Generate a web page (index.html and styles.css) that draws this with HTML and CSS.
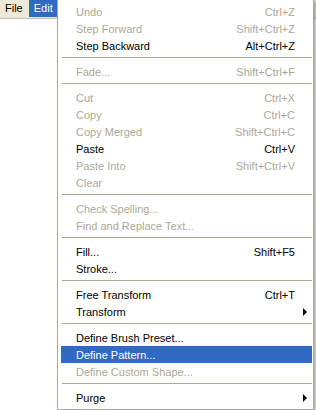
FILE: index.html
```html
<!DOCTYPE html>
<html lang="en">
<head>
    <meta charset="UTF-8">
    <meta name="viewport" content="width=device-width, initial-scale=1.0">
    <title>Edit Menu</title>
    <link rel="stylesheet" href="styles.css">
</head>
<body>
    <div class="window">
        <div class="menubar">
            <span class="menubar-item">File</span>
            <span class="menubar-item active">Edit</span>
        </div>

        <ul class="dropdown">
            <li class="item disabled"><span>Undo</span><span class="key">Ctrl+Z</span></li>
            <li class="item disabled"><span>Step Forward</span><span class="key">Shift+Ctrl+Z</span></li>
            <li class="item"><span>Step Backward</span><span class="key">Alt+Ctrl+Z</span></li>
            <li class="sep"></li>
            <li class="item disabled"><span>Fade...</span><span class="key">Shift+Ctrl+F</span></li>
            <li class="sep"></li>
            <li class="item disabled"><span>Cut</span><span class="key">Ctrl+X</span></li>
            <li class="item disabled"><span>Copy</span><span class="key">Ctrl+C</span></li>
            <li class="item disabled"><span>Copy Merged</span><span class="key">Shift+Ctrl+C</span></li>
            <li class="item"><span>Paste</span><span class="key">Ctrl+V</span></li>
            <li class="item disabled"><span>Paste Into</span><span class="key">Shift+Ctrl+V</span></li>
            <li class="item disabled"><span>Clear</span></li>
            <li class="sep"></li>
            <li class="item disabled"><span>Check Spelling...</span></li>
            <li class="item disabled"><span>Find and Replace Text...</span></li>
            <li class="sep"></li>
            <li class="item"><span>Fill...</span><span class="key">Shift+F5</span></li>
            <li class="item"><span>Stroke...</span></li>
            <li class="sep"></li>
            <li class="item"><span>Free Transform</span><span class="key">Ctrl+T</span></li>
            <li class="item submenu"><span>Transform</span></li>
            <li class="sep"></li>
            <li class="item"><span>Define Brush Preset...</span></li>
            <li class="item selected"><span>Define Pattern...</span></li>
            <li class="item disabled"><span>Define Custom Shape...</span></li>
            <li class="sep"></li>
            <li class="item submenu"><span>Purge</span></li>
        </ul>
    </div>
</body>
</html>
```

FILE: styles.css
```css
body {
    margin: 0;
    padding: 0;
    background-color: #ffffff;
    font-family: "Liberation Sans", Arial, sans-serif;
    font-size: 11px;
    color: #000;
}

.window {
    position: relative;
    width: 316px;
    height: 410px;
    overflow: hidden;
}

.menubar {
    display: flex;
    height: 18px;
    background-color: #ece9d8;
    border-bottom: 1px solid #c4c1b4;
}

.menubar-item {
    padding: 0 6px 0 5px;
    line-height: 17px;
    height: 17px;
}

.menubar-item.active {
    width: 18px;
    background-color: #316ac5;
    color: #fff;
}

.dropdown {
    position: absolute;
    left: 57px;
    top: -1px;
    width: 251px;
    margin: 0;
    padding: 3px 1px 3px 3px;
    list-style: none;
    background-color: #fff;
    border: 1px solid #aca899;
    box-shadow: 2px 2px 2px rgba(0, 0, 0, 0.3);
}

.item {
    position: relative;
    display: flex;
    height: 15px;
    padding: 2px 17px 0 15px;
    line-height: 15px;
    white-space: nowrap;
}

.item .key {
    margin-left: auto;
}

.item.disabled {
    color: #aca899;
}

.item.selected {
    background-color: #316ac5;
    color: #fff;
}

.item.submenu::after {
    content: "";
    position: absolute;
    right: 5px;
    top: 5px;
    border-left: 4px solid #000;
    border-top: 4px solid transparent;
    border-bottom: 4px solid transparent;
}

.sep {
    height: 1px;
    margin: 3px 0 5px 1px;
    background-color: #aca899;
}
```
